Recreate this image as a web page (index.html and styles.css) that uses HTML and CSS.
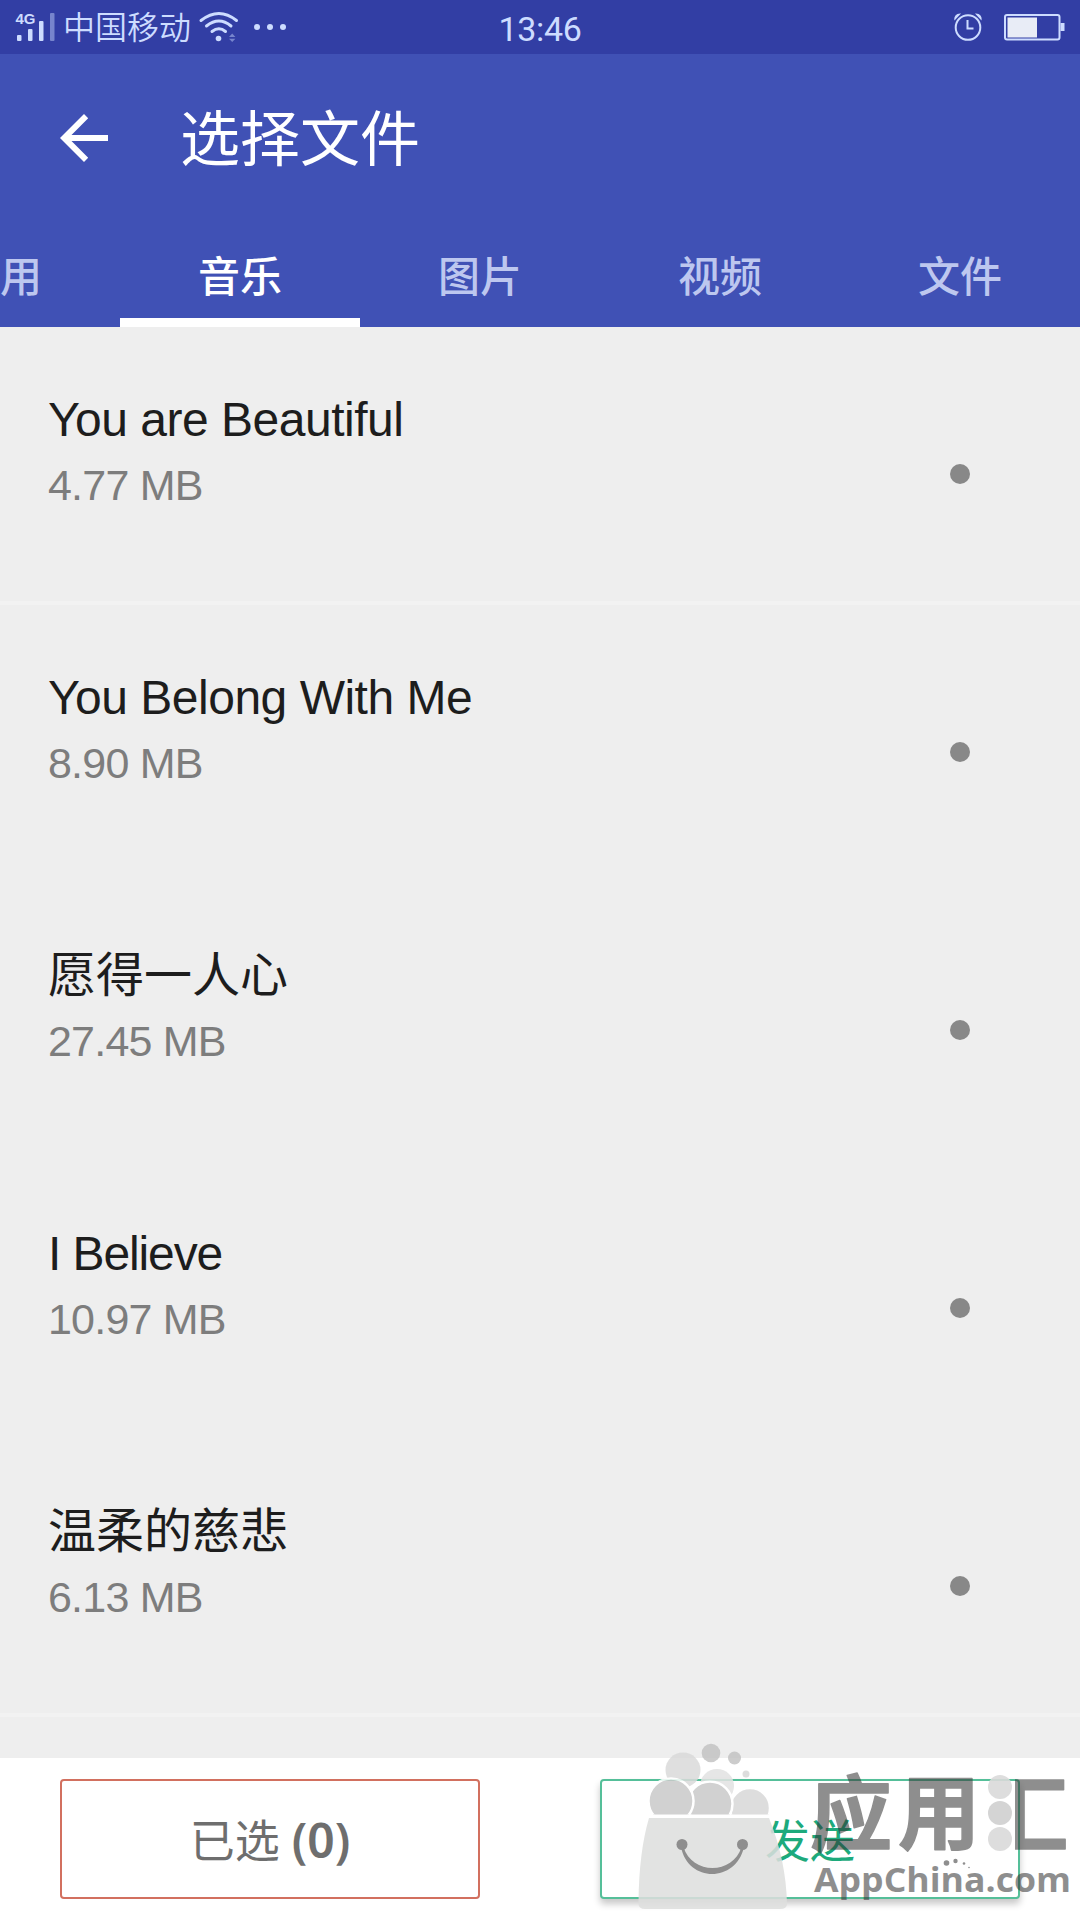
FILE: index.html
```html
<!DOCTYPE html>
<html lang="zh-CN">
<head>
<meta charset="utf-8">
<title>选择文件</title>
<link rel="stylesheet" href="styles.css">
</head>
<body>
<div class="screen">
  <div class="status">
    <div class="status-left">
      <svg class="signal" width="42" height="54" viewBox="14 0 42 54">
        <text x="15.5" y="24" class="net">4G</text>
        <rect x="17" y="35" width="4.500" height="6" rx="1"/>
        <rect x="28" y="29" width="4.500" height="12" rx="1"/>
        <rect x="39" y="21" width="4.500" height="20" rx="1"/>
        <rect x="50" y="13" width="4.500" height="28" rx="1" opacity=".45"/>
      </svg>
      <span class="carrier">中国移动</span>
      <svg class="wifi" width="90" height="54" viewBox="198 0 90 54">
        <g class="line">
          <path d="M201 20.500Q219 6.500 236.500 20.500"/>
          <path d="M206.500 26Q219 16 231 26"/>
          <path d="M212 31.500Q219 26 225.500 31.500"/>
        </g>
        <circle cx="218.500" cy="38.500" r="2.800"/>
        <path d="M229 37l3.200-3.500 3.200 3.500zM229 38.700l3.200 3.300 3.200-3.300z" opacity=".45"/>
        <circle cx="257" cy="27" r="3"/><circle cx="270" cy="27" r="3"/><circle cx="283" cy="27" r="3"/>
      </svg>
    </div>
    <span class="time">13:46</span>
    <svg class="status-right" width="114" height="54" viewBox="952 0 114 54">
      <g class="thin">
        <circle cx="968" cy="27.500" r="12.300"/>
        <path d="M967.500 20v8.500h6"/>
      </g>
      <path d="M954.500 20.500c-1-4 2-7.500 6.500-7zM981.500 20.500c1-4-2-7.500-6.500-7z"/>
      <rect class="thin" x="1005" y="15" width="54.500" height="24.500" rx="2"/>
      <path d="M1007.500 17.500h29.500v20h-29.500z" fill="#e8ecf6"/>
      <rect x="1060.500" y="23" width="4" height="8"/>
    </svg>
  </div>

  <header class="appbar">
    <div class="toolbar">
      <svg width="48" height="48" viewBox="0 0 48 48"><path d="M48 21v6H11.500l16.700 16.800L24 48 0 24 24 0l4.200 4.200L11.500 21z" fill="#fff"/></svg>
      <h1>选择文件</h1>
    </div>
    <nav class="tabs">
      <span>应用</span><span class="active">音乐</span><span>图片</span><span>视频</span><span>文件</span>
    </nav>
  </header>

  <main class="list">
    <div class="row lined"><div><p class="name en1">You are Beautiful</p><p class="size">4.77 MB</p></div><i class="dot"></i></div>
    <div class="row"><div><p class="name en1">You Belong With Me</p><p class="size">8.90 MB</p></div><i class="dot"></i></div>
    <div class="row"><div><p class="name">愿得一人心</p><p class="size">27.45 MB</p></div><i class="dot"></i></div>
    <div class="row"><div><p class="name en2">I Believe</p><p class="size">10.97 MB</p></div><i class="dot"></i></div>
    <div class="row lined"><div><p class="name">温柔的慈悲</p><p class="size">6.13 MB</p></div><i class="dot"></i></div>
  </main>

  <footer class="actions">
    <div class="btn picked">已选&nbsp;<b>(0)</b></div>
    <div class="btn send">发送</div>
  </footer>

  <svg class="brand" width="460" height="180" viewBox="620 1740 460 180">
    <defs>
      <clipPath id="balls"><path d="M630 1740h160v74.500H630z"/></clipPath>
      <clipPath id="box"><path d="M1015 1760h64v110h-64z"/></clipPath>
    </defs>
    <g opacity=".86">
      <g clip-path="url(#balls)">
        <circle cx="683" cy="1770" r="17.500" fill="#dadada"/>
        <circle cx="717" cy="1786" r="17" fill="#e2e2e2"/>
        <circle cx="750" cy="1808" r="20" fill="#d8d8d8" class="ring"/>
        <circle cx="710" cy="1804" r="22.500" fill="#cacaca" class="ring"/>
        <circle cx="671" cy="1801" r="22.500" fill="#cacaca" class="ring"/>
        <circle cx="711" cy="1753" r="9.300" fill="#c4c4c4"/>
        <circle cx="734.500" cy="1758" r="6.500" fill="#c4c4c4"/>
        <circle cx="746" cy="1774" r="3.500" fill="#d8d8d8"/>
      </g>
      <path d="M649 1818H769Q786 1860 787 1904Q787 1909 780 1909H645Q638 1909 638.500 1902Q639 1852 649 1818z" fill="#dedfde"/>
      <g fill="#7c7c7c">
        <circle cx="682" cy="1844.500" r="5.500"/>
        <circle cx="742.500" cy="1844.500" r="5.500"/>
        <path d="M681 1847C688 1883 736 1883 744 1847L741.500 1847C733 1875 692 1875 683.500 1847z"/>
      </g>
    </g>
    <g fill="#d0d0d0" opacity=".9">
      <circle cx="1000" cy="1787" r="12" fill="#dadada"/><circle cx="1000" cy="1813" r="12"/><circle cx="1000" cy="1839" r="12" fill="#dadada"/>
    </g>
    <g class="mark">
      <text x="810" y="1844" class="logo">应</text>
      <text x="898" y="1843" class="logo">用</text>
      <text x="986" y="1845" class="logo" clip-path="url(#box)">汇</text>
      <text x="814" y="1892" class="site" textLength="257" lengthAdjust="spacingAndGlyphs">AppChina.com</text>
      <circle cx="946.500" cy="1863" r="2.800"/><circle cx="955.500" cy="1861" r="2.200"/><circle cx="964" cy="1863.500" r="1.300"/><circle cx="969" cy="1867.500" r=".8"/>
    </g>
  </svg>
</div>
</body>
</html>
```
FILE: styles.css
```css
* { box-sizing: border-box; margin: 0; padding: 0; }
body { width: 1080px; height: 1920px; overflow: hidden; font-family: "Liberation Sans", "Noto Sans CJK SC", sans-serif; }
.screen { position: relative; width: 1080px; height: 1920px; display: flex; flex-direction: column; overflow: hidden; background: #eee; }

.status { height: 54px; flex: none; display: grid; grid-template-columns: 1fr auto 1fr; grid-template-rows: 54px; align-items: center; background: #323ea4; color: #cddcff; fill: #cddcff; padding: 0 14px; }
.status svg { display: block; }
.status-left { display: flex; align-items: center; height: 54px; }
.net { font: bold 15px "Liberation Sans", sans-serif; }
.carrier { margin-left: 7px; width: 135px; font: 350 32px/50px "Noto Sans CJK SC", sans-serif; height: 54px; }
.line { fill: none; stroke: #cddcff; stroke-width: 3; stroke-linecap: round; }
.thin { fill: none; stroke: #cddcff; stroke-width: 2; }
.time { font: 400 34px/54px Roboto, sans-serif; padding-top: 2px; height: 54px; letter-spacing: -.3px; }
.status-right { justify-self: end; }

.appbar { height: 273px; flex: none; display: flex; flex-direction: column; background: #4051b5; color: #fff; }
.toolbar { height: 168px; display: flex; align-items: center; padding-left: 60px; gap: 72px; }
.toolbar h1 { font: 400 60px/80px "Noto Sans CJK SC", sans-serif; padding-bottom: 6px; }
.tabs { height: 105px; display: flex; margin-left: -120px; }
.tabs span { width: 240px; flex: none; height: 105px; text-align: center; font: 500 42px/104px "Noto Sans CJK SC", sans-serif; color: #bdc7ef; }
.tabs .active { color: #fff; border-bottom: 9px solid #fff; }

.list { flex: 1; min-height: 0; overflow: hidden; }
.row { height: 278px; display: flex; justify-content: space-between; padding: 63px 110px 0 48px; border-bottom: 4px solid #eee; }
.row.lined { border-bottom-color: #f2f2f2; }
.name { font-size: 48px; line-height: 60px; color: #1d1d1d; white-space: nowrap; }
.size { font-size: 43px; line-height: 48px; margin-top: 11px; color: #7d7d7d; letter-spacing: -.8px; }
.dot { width: 20px; height: 20px; margin-top: 74px; border-radius: 50%; background: #888; }
.en1 { letter-spacing: -.5px; }
.en2 { letter-spacing: -1.1px; }

.actions { height: 162px; flex: none; display: flex; gap: 120px; padding: 21px 60px; background: #fff; }
.btn { width: 420px; height: 120px; border: 2px solid; border-radius: 4px; text-align: center; font: 400 45px/116px "Noto Sans CJK SC", sans-serif; background: #fff; }
.picked { border-color: #d2705f; color: #6e6e6e; }
.picked b { font: 600 48px/100px "Noto Sans", sans-serif; margin-left: 2px; }
.send { border-color: #55bf99; color: #1daa7c; box-shadow: 0 5px 7px rgba(0,0,0,.22); }

.brand { position: absolute; left: 620px; top: 1740px; }
.ring { stroke: #fff; stroke-width: 2.500; }
.mark { fill: #333; opacity: .55; }
.logo { font: 700 82px "Noto Sans CJK SC", sans-serif; stroke: #333; stroke-width: 1.500; stroke-linejoin: round; }
.site { font: 700 34px "Open Sans", sans-serif; }
```
